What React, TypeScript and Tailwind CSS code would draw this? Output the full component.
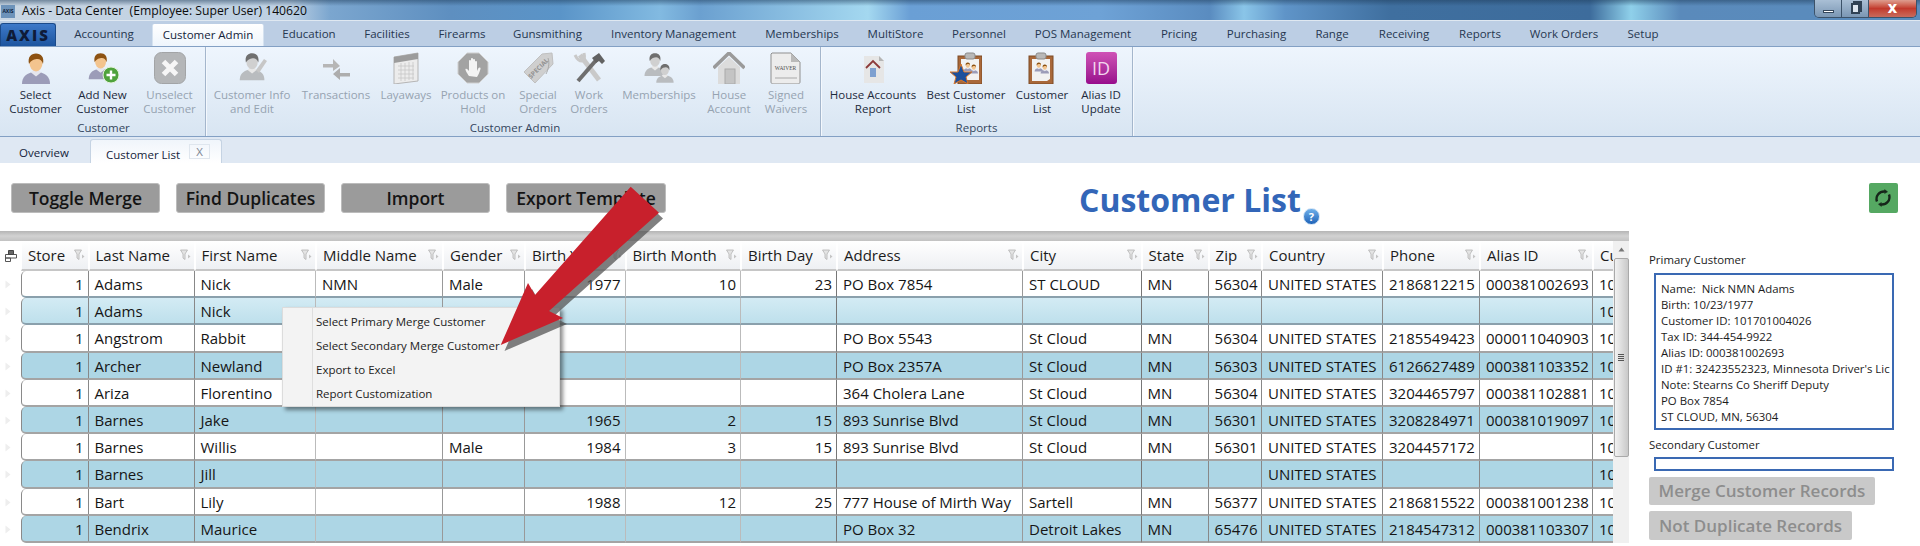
import type { ReactNode } from 'react';

const GRID_COLS =
  'grid grid-cols-[21px_67.5px_106px_121.5px_127px_82px_100.5px_115.5px_96px_186px_118.6px_67px_53.4px_121px_97px_113px_40px]';

const tabs = [
  { label: 'Accounting', w: 'w-[96px]' },
  { label: 'Customer Admin', w: 'w-[112px]', active: true },
  { label: 'Education', w: 'w-[90px]' },
  { label: 'Facilities', w: 'w-[66px]' },
  { label: 'Firearms', w: 'w-[84px]' },
  { label: 'Gunsmithing', w: 'w-[87px]' },
  { label: 'Inventory Management', w: 'w-[165px]' },
  { label: 'Memberships', w: 'w-[92px]' },
  { label: 'MultiStore', w: 'w-[95px]' },
  { label: 'Personnel', w: 'w-[72px]' },
  { label: 'POS Management', w: 'w-[136px]' },
  { label: 'Pricing', w: 'w-[56px]' },
  { label: 'Purchasing', w: 'w-[99px]' },
  { label: 'Range', w: 'w-[52px]' },
  { label: 'Receiving', w: 'w-[92px]' },
  { label: 'Reports', w: 'w-[60px]' },
  { label: 'Work Orders', w: 'w-[108px]' },
  { label: 'Setup', w: 'w-[50px]' },
];

const headers = [
  'Store',
  'Last Name',
  'First Name',
  'Middle Name',
  'Gender',
  'Birth Year',
  'Birth Month',
  'Birth Day',
  'Address',
  'City',
  'State',
  'Zip',
  'Country',
  'Phone',
  'Alias ID',
  'Customer ID',
];

const US = 'UNITED STATES';
const rows = [
  ['1', 'Adams', 'Nick', 'NMN', 'Male', '1977', '10', '23', 'PO Box 7854', 'ST CLOUD', 'MN', '56304', US, '2186812215', '000381002693', '101701004026'],
  ['1', 'Adams', 'Nick', '', '', '', '', '', '', '', '', '', '', '', '', '10'],
  ['1', 'Angstrom', 'Rabbit', '', '', '', '', '', 'PO Box 5543', 'St Cloud', 'MN', '56304', US, '2185549423', '000011040903', '10'],
  ['1', 'Archer', 'Newland', '', '', '', '', '', 'PO Box 2357A', 'St Cloud', 'MN', '56303', US, '6126627489', '000381103352', '10'],
  ['1', 'Ariza', 'Florentino', '', '', '', '', '', '364 Cholera Lane', 'St Cloud', 'MN', '56304', US, '3204465797', '000381102881', '10'],
  ['1', 'Barnes', 'Jake', '', '', '1965', '2', '15', '893 Sunrise Blvd', 'St Cloud', 'MN', '56301', US, '3208284971', '000381019097', '10'],
  ['1', 'Barnes', 'Willis', '', 'Male', '1984', '3', '15', '893 Sunrise Blvd', 'St Cloud', 'MN', '56301', US, '3204457172', '', '10'],
  ['1', 'Barnes', 'Jill', '', '', '', '', '', '', '', '', '', US, '', '', '10'],
  ['1', 'Bart', 'Lily', '', '', '1988', '12', '25', '777 House of Mirth Way', 'Sartell', 'MN', '56377', US, '2186815522', '000381001238', '10'],
  ['1', 'Bendrix', 'Maurice', '', '', '', '', '', 'PO Box 32', 'Detroit Lakes', 'MN', '65476', US, '2184547312', '000381103307', '10'],
];

const RIGHT_ALIGNED = [0, 5, 6, 7];

// the column rules are not all the same grey in the picture
const SEPARATORS = [
  'border-r-[#888888]',
  'border-r-[#888888]',
  'border-r-[#bbbbbb]',
  'border-r-[#999999]',
  'border-r-[#999999]',
  'border-r-[#bbbbbb]',
  'border-r-[#bbbbbb]',
  'border-r-[#777777]',
  'border-r-[#999999]',
  'border-r-[#777777]',
  'border-r-[#888888]',
  'border-r-[#888888]',
  'border-r-[#888888]',
  'border-r-[#888888]',
  'border-r-[#888888]',
  'border-r-[#888888]',
];

const customerLines = [
  'Name:  Nick NMN Adams',
  'Birth: 10/23/1977',
  'Customer ID: 101701004026',
  'Tax ID: 344-454-9922',
  'Alias ID: 000381002693',
  "ID #1: 32423552323, Minnesota Driver's Lic",
  'Note: Stearns Co Sheriff Deputy',
  'PO Box 7854',
  'ST CLOUD, MN, 56304',
];

const menuItems = [
  'Select Primary Merge Customer',
  'Select Secondary Merge Customer',
  'Export to Excel',
  'Report Customization',
];

function Person({ x = 0, y = 0, s = 1, gray = false }: { x?: number; y?: number; s?: number; gray?: boolean }) {
  return (
    <g transform={`translate(${x} ${y}) scale(${s})`}>
      <path d="M2 32C2 25 6 22 11 20.5L21 20.5C26 22 30 25 30 32Z" fill={gray ? '#b9bcbf' : '#9c9cb8'} />
      <path d="M11 20.5L16 24.5L21 20.5L19 18L13 18Z" fill={gray ? '#e8e8e8' : '#e6e6ee'} />
      <ellipse cx="16" cy="11" rx="6.5" ry="8.5" fill={gray ? '#d0d0d0' : '#f3c48e'} />
      <path d="M9 12C7.5 5 11 1.5 16 1.5C21 1.5 24.5 5 23 12C22 8.5 20 7 17.5 7C15 7 11 8 9 12Z" fill={gray ? '#6f6f6f' : '#8d5212'} />
    </g>
  );
}

function AddBadge() {
  return (
    <g>
      <circle cx="24" cy="23" r="8" fill="#4fa23c" stroke="#e4f2dc" strokeWidth="1" />
      <path d="M24 18.5V27.5M19.5 23H28.5" stroke="#fff" strokeWidth="2.4" />
    </g>
  );
}

function Clipboard({ star = false }: { star?: boolean }) {
  return (
    <svg width="32" height="32" viewBox="0 0 32 32">
      <rect x={star ? 8 : 3} y="4" width="24" height="28" fill="#a9683a" stroke="#7d4a24" />
      <path d={star ? 'M11 7H29V28H11Z' : 'M6 7H24V27L21 29H6Z'} fill="#f2f2f2" />
      <rect x={star ? 15 : 10} y="1" width="10" height="6" rx="2" fill="#b8b8b8" stroke="#8b8b8b" />
      <Person x={star ? 13 : 8} y={10} s={0.3} />
      <Person x={star ? 19 : 14} y={12} s={0.3} />
      {star && (
        <path
          d="M11 12L14 20L22 20L16 25L18 32L11 28L4 32L6 25L0 20L8 20Z"
          fill="#1c4f9c"
          stroke="#d9772a"
          strokeWidth="1"
        />
      )}
    </svg>
  );
}

const ICONS: Record<string, ReactNode> = {
  select: (
    <svg width="32" height="32" viewBox="0 0 32 32">
      <Person />
    </svg>
  ),
  add: (
    <svg width="32" height="32" viewBox="0 0 32 32">
      <Person s={0.85} />
      <AddBadge />
    </svg>
  ),
  unselect: (
    <svg width="32" height="32" viewBox="0 0 32 32">
      <rect x="0.5" y="0.5" width="31" height="31" rx="7" fill="#b4b6b8" stroke="#a2a4a6" />
      <path d="M9.5 9.5L22.5 22.5M22.5 9.5L9.5 22.5" stroke="#f6f6f6" strokeWidth="5" />
    </svg>
  ),
  info: (
    <svg width="32" height="32" viewBox="0 0 32 32">
      <Person x={2} s={0.88} gray />
      <path d="M20 18L28 7L31 9L23 21Z" fill="#c7c7c7" />
    </svg>
  ),
  transactions: (
    <svg width="32" height="32" viewBox="0 0 32 32">
      <path d="M3 12H13V7L20 14L13 19V15.500H3Z" fill="#b6b6b6" />
      <path d="M30 21H20V16L13 22L20 28V24.500H30Z" fill="#adadad" />
    </svg>
  ),
  layaways: (
    <svg width="32" height="32" viewBox="0 0 32 32">
      <path d="M4 5L28 1V29L4 32Z" fill="#ececec" stroke="#b5b5b5" />
      <path d="M4 5L28 1V7L4 11Z" fill="#9c9c9c" />
      <path d="M8 14H24M8 18H24M8 22H24M8 26H24M11 11V29M15 11V29M19 10V28M23 10V28" stroke="#c8c8c8" strokeWidth="0.8" />
    </svg>
  ),
  hold: (
    <svg width="32" height="32" viewBox="0 0 32 32">
      <path d="M10 1H22L31 10V22L22 31H10L1 22V10Z" fill="#a3a3a3" stroke="#cfcfcf" />
      <path
        d="M12 24C10 21 8 18 8.500 17C9.500 16 11 17.500 12 19V9C12 7.500 14 7.500 14 9V15V7C14 5.500 16 5.500 16 7V15V8C16 6.500 18 6.500 18 8V16V10C18 8.500 20 8.500 20 10V19L21.500 16C22.500 15 24 15.500 23.500 17C22.500 20 21.500 23 20 25Z"
        fill="#f4f4f4"
      />
    </svg>
  ),
  special: (
    <svg width="32" height="32" viewBox="0 0 32 32">
      <path d="M2 20L20 2L30 1L31 12L13 31Z" fill="#cfcfcf" stroke="#c0c0c0" />
      <text
        x="0"
        y="0"
        transform="translate(9 27) rotate(-45)"
        fontFamily="Open Sans, sans-serif"
        fontSize="6.500"
        fontWeight="700"
        fill="#8f8f8f"
      >
        SPECIAL
      </text>
      <path d="M26 6C28 12 26 18 24 22" stroke="#a8a8a8" fill="none" />
    </svg>
  ),
  work: (
    <svg width="32" height="32" viewBox="0 0 32 32">
      <path d="M7 3L26 28" stroke="#c9c9c9" strokeWidth="5" />
      <path d="M2 3C4 7 6 9 9 9C12 8 12 5 11 1" stroke="#c9c9c9" strokeWidth="3" fill="none" />
      <path d="M25 6L5 29" stroke="#6e6e6e" strokeWidth="4" />
      <path d="M19 6L26 1L32 9L29 12L26 9L23 11Z" fill="#626262" />
    </svg>
  ),
  members: (
    <svg width="32" height="32" viewBox="0 0 32 32">
      <Person x={0} y={0} s={0.75} gray />
      <Person x={12} y={11} s={0.62} gray />
    </svg>
  ),
  house: (
    <svg width="32" height="32" viewBox="0 0 32 32">
      <path d="M5 15L16 5L27 15V32H5Z" fill="#dcdcdc" />
      <path d="M0.500 16L16 1L31.500 16" fill="none" stroke="#9a9a9a" strokeWidth="3.500" />
      <rect x="12" y="17" width="10" height="15" fill="#c4c4c4" stroke="#aaaaaa" />
    </svg>
  ),
  waiver: (
    <svg width="32" height="32" viewBox="0 0 32 32">
      <path d="M2 1H21L30 10V30C30 31 29 32 28 32H3C2 32 1 31 1 30V2Z" fill="#ececec" stroke="#8f8f8f" />
      <path d="M21 1V10H30Z" fill="#b9b9b9" />
      <text x="15.500" y="18" textAnchor="middle" fontFamily="Liberation Serif, serif" fontSize="5.500" fill="#4c4c4c">
        WAIVER
      </text>
      <path d="M5 26H27" stroke="#a8a8a8" />
    </svg>
  ),
  houseReport: (
    <svg width="32" height="32" viewBox="0 0 32 32">
      <path d="M7 4H22L27 9V31H7Z" fill="#e6e6e6" />
      <path d="M22 4V9H27Z" fill="#b5b5b5" />
      <path d="M9 16L16 9L23 16" fill="none" stroke="#8c3a3a" strokeWidth="1.800" />
      <rect x="13" y="16" width="6" height="9" fill="#7ea0d0" />
    </svg>
  ),
  best: <Clipboard star />,
  list: <Clipboard />,
  alias: (
    <div className="w-[31px] h-[32px] rounded-[3px] bg-gradient-to-b from-[#cf52b6] to-[#98098c] flex items-center justify-center text-[18px] leading-none text-[#f3d6ee]">
      ID
    </div>
  ),
};

function RibbonButton({ icon, l1, l2, w, off }: { icon: string; l1: string; l2?: string; w: string; off?: boolean }) {
  return (
    <div className={`${w} flex flex-col items-center shrink-0`}>
      <div className="h-[32px] flex items-center justify-center">{ICONS[icon]}</div>
      <div
        className={`mt-[4px] text-center text-[11.5px] leading-[14px] whitespace-nowrap ${off ? 'text-[#96a3b1]' : 'text-[#1d2a3c]'}`}
      >
        <div>{l1}</div>
        <div>{l2}</div>
      </div>
    </div>
  );
}

function RibbonGroup({ label, w, pl, children }: { label: string; w: string; pl: string; children: ReactNode }) {
  return (
    <div className={`${w} ${pl} shrink-0 h-full flex flex-col border-r border-[#a4b6cc] shadow-[1px_0_0_#f4f8fd]`}>
      <div className="flex pt-[5px]">{children}</div>
      <div className="text-center text-[11.5px] leading-[14px] mt-[5px] text-[#34465e]">{label}</div>
    </div>
  );
}

function FilterIcon() {
  return (
    <svg width="11" height="12" viewBox="0 0 11 12" className="shrink-0">
      <path d="M0.500 1H7.500L5 5V10.500L3 9V5Z" fill="#e4e4e4" stroke="#b3b3b3" strokeWidth="0.8" />
      <path d="M8 5.500L10.500 7.500L8 9.500Z" fill="#c4c4c4" />
    </svg>
  );
}

function GridHeader() {
  return (
    <div className={`${GRID_COLS} h-[30px]`}>
      <div className="flex items-center justify-center bg-white">
        <svg width="14" height="14" viewBox="0 0 14 14">
          <path d="M1.500 5.500H12.500V9H1.500ZM1.500 9H6.500V12.500H1.500Z" fill="none" stroke="#555" />
          <path d="M4.500 1.500H9.500V5.500H4.500Z" fill="#666" stroke="#444" />
        </svg>
      </div>
      {headers.map((h, i) => (
        <div
          key={h}
          className="flex items-center pl-[6px] pr-[3px] gap-[2px] overflow-hidden bg-gradient-to-b from-[#ffffff] to-[#eef0f3] border-x border-white border-b-2 border-b-[#c6c6c6] text-[15px] leading-none text-[#1c1c1c]"
        >
          <span className="flex-1 whitespace-nowrap">{h}</span>
          {i < 15 && <FilterIcon />}
        </div>
      ))}
    </div>
  );
}

function GridRow({ cells, index }: { cells: string[]; index: number }) {
  const bg = index === 1 ? 'bg-gradient-to-b from-[#d3ebf4] to-[#bee0ec]' : index % 2 === 0 ? 'bg-white' : 'bg-[#add6e5]';
  const rule = index < 2 ? 'border-b-[#8aa0ac]' : 'border-b-[#a4a4a4]';
  return (
    <div className={`${GRID_COLS} h-[27.2px]`}>
      <div className="flex items-center justify-center bg-white">
        <svg width="6" height="9" viewBox="0 0 6 9" className="-ml-[5px]">
          <path d="M0.500 0.500L5.500 4.500L0.500 8.500Z" fill="#eeeeee" />
        </svg>
      </div>
      {cells.map((c, i) => (
        <div
          key={i}
          className={`${bg} ${rule} ${SEPARATORS[i]} flex items-center overflow-hidden whitespace-nowrap border-b-2 border-r text-[15px] leading-none text-[#151515] pl-[6px] pr-[4px] pt-[2px] ${
            i === 0 ? 'rounded-l-[5px] border-l border-l-[#8a8a8a] ' : ''
          }${RIGHT_ALIGNED.includes(i) ? 'justify-end' : ''}`}
        >
          {c}
        </div>
      ))}
    </div>
  );
}

function Scrollbar() {
  return (
    <div className="w-[16px] shrink-0 flex flex-col items-center bg-[#f0f0f0]">
      <div className="h-[17px] flex items-center justify-center">
        <svg width="7" height="5" viewBox="0 0 7 5">
          <path d="M3.500 0.500L6.500 4.500H0.500Z" fill="#777" />
        </svg>
      </div>
      <div className="h-[199px] w-[15px] rounded-[2px] border border-[#a9a9a9] bg-gradient-to-r from-[#f2f2f2] to-[#c9c9c9] flex flex-col items-center justify-center gap-[1px]">
        <div className="w-[6px] h-[1px] bg-[#555]" />
        <div className="w-[6px] h-[1px] bg-[#555]" />
        <div className="w-[6px] h-[1px] bg-[#555]" />
        <div className="w-[6px] h-[1px] bg-[#555]" />
      </div>
    </div>
  );
}

function ActionButton({ children, w }: { children: ReactNode; w: string }) {
  return (
    <div className={`${w} h-[30px] rounded-[3px] border border-[#bcbcbc] bg-[#9b9b9b] flex items-center justify-center text-[17.5px] font-semibold text-[#141414] whitespace-nowrap`}>
      {children}
    </div>
  );
}

export default function App() {
  return (
    <div className="relative w-[1920px] h-[546px] overflow-hidden bg-white font-['Open_Sans',sans-serif]">
      {/* Title bar */}
      <div className="h-[21px] flex bg-[linear-gradient(180deg,rgba(30,60,90,0.5)_0%,rgba(30,60,90,0)_30%),linear-gradient(90deg,#c9d6e3_0px,#bdd0e3_290px,#7ba6cf_330px,#5e8fc0_450px,#5a94c8_560px,#82bae1_660px,#6ba0d0_700px,#a4d8f0_868px,#6a9fd5_910px,#6ea2d6_1100px,#5a8cc0_1210px,#8ac5e8_1244px,#5f94c8_1285px,#3f6f9f_1390px,#3d6c9c_1590px,#8fd0ea_1631px,#5a8abb_1680px,#5a8cbd_1920px)] border-b border-[#dfe8f1]">
        <div className="ml-[1px] mt-[5px] w-[14px] h-[13px] bg-[#6d93ba] text-[5px] leading-[13px] font-bold text-center text-[#10233d]">AXIS</div>
        <div className="ml-[7px] text-[12.2px] leading-[21px] text-[#0c0c0c] whitespace-pre">Axis - Data Center  (Employee: Super User) 140620</div>
        <div className="ml-auto mr-[3px] h-[18px] flex rounded-b-[5px] overflow-hidden border border-t-0 border-[#3c5269]">
          <div className="w-[27px] bg-gradient-to-b from-[#a9bfd5] to-[#7b97b4] flex items-center justify-center border-r border-[#3c5269]">
            <div className="w-[11px] h-[3px] mt-[6px] bg-white border border-[#34475c]" />
          </div>
          <div className="w-[27px] bg-gradient-to-b from-[#a9bfd5] to-[#7b97b4] flex items-center justify-center border-r border-[#3c5269]">
            <div className="w-[9px] h-[11px] bg-[#dce6f0] border-2 border-[#2f4255] shadow-[2px_-2px_0_#2f4255]" />
          </div>
          <div className="w-[47px] bg-gradient-to-b from-[#dd9d8f] via-[#c2392c] to-[#c86a5c] flex items-center justify-center text-[13px] font-extrabold leading-none text-white">X</div>
        </div>
      </div>

      {/* Ribbon tabs */}
      <div className="h-[25px] flex bg-[#bccee4] text-[11.5px] text-[#263750]">
        <div className="w-[56px] mt-[2px] rounded-t-[3px] bg-gradient-to-b from-[#3d79c9] to-[#1d559f] border border-b-0 border-[#1b4a8a] flex items-center justify-center text-[15px] font-extrabold tracking-[2px] text-[#0f1b38]">
          AXIS
        </div>
        {tabs.map((t) =>
          t.active ? (
            <div key={t.label} className={`${t.w} mt-[3px] rounded-t-[2px] bg-gradient-to-b from-[#ffffff] to-[#eef5fc] flex items-center justify-center text-[#14233a] relative z-10 border-x border-[#d5e2f0]`}>
              {t.label}
            </div>
          ) : (
            <div key={t.label} className={`${t.w} flex items-center justify-center whitespace-nowrap pt-[1px]`}>
              {t.label}
            </div>
          )
        )}
      </div>

      {/* Ribbon */}
      <div className="h-[91px] flex border-y border-[#83a0c4] bg-gradient-to-b from-[#eef5fd] to-[#d8e5f2]">
        <RibbonGroup label="Customer" w="w-[206px]" pl="pl-[2px]">
          <RibbonButton icon="select" l1="Select" l2="Customer" w="w-[67px]" />
          <RibbonButton icon="add" l1="Add New" l2="Customer" w="w-[67px]" />
          <RibbonButton icon="unselect" l1="Unselect" l2="Customer" w="w-[67px]" off />
        </RibbonGroup>
        <RibbonGroup label="Customer Admin" w="w-[615px]" pl="pl-[4px]">
          <RibbonButton icon="info" l1="Customer Info" l2="and Edit" w="w-[84px]" off />
          <RibbonButton icon="transactions" l1="Transactions" w="w-[84px]" off />
          <RibbonButton icon="layaways" l1="Layaways" w="w-[56px]" off />
          <RibbonButton icon="hold" l1="Products on" l2="Hold" w="w-[78px]" off />
          <RibbonButton icon="special" l1="Special" l2="Orders" w="w-[52px]" off />
          <RibbonButton icon="work" l1="Work" l2="Orders" w="w-[50px]" off />
          <RibbonButton icon="members" l1="Memberships" w="w-[90px]" off />
          <RibbonButton icon="house" l1="House" l2="Account" w="w-[50px]" off />
          <RibbonButton icon="waiver" l1="Signed" l2="Waivers" w="w-[64px]" off />
        </RibbonGroup>
        <RibbonGroup label="Reports" w="w-[312px]" pl="pl-[0px]">
          <RibbonButton icon="houseReport" l1="House Accounts" l2="Report" w="w-[104px]" />
          <RibbonButton icon="best" l1="Best Customer" l2="List" w="w-[82px]" />
          <RibbonButton icon="list" l1="Customer" l2="List" w="w-[70px]" />
          <RibbonButton icon="alias" l1="Alias ID" l2="Update" w="w-[48px]" />
        </RibbonGroup>
      </div>

      {/* Document tabs */}
      <div className="h-[26px] flex bg-[#dfe8f3] text-[11.5px] text-[#14233a]">
        <div className="w-[90px] pl-[19px] leading-[32px]">Overview</div>
        <div className="w-[132px] mt-[2px] flex items-start rounded-t-[3px] border border-b-0 border-[#c5d3e3] bg-gradient-to-b from-[#f0f5fb] to-[#ffffff]">
          <span className="ml-[15px] mt-[7px] leading-[16px]">Customer List</span>
          <span className="ml-[9px] mt-[4px] w-[21px] h-[15px] flex items-center justify-center border border-[#dfe6ee] text-[#7d8794] leading-none">X</span>
        </div>
      </div>

      {/* Toolbar */}
      <div className="h-[68px] flex items-start pt-[20px] pl-[11px]">
        <div className="flex gap-[16px]">
          <ActionButton w="w-[149px]">Toggle Merge</ActionButton>
          <ActionButton w="w-[149px]">Find Duplicates</ActionButton>
          <ActionButton w="w-[149px]">Import</ActionButton>
          <ActionButton w="w-[160px]">Export Template</ActionButton>
        </div>
        <div className="ml-[413px] -mt-[5px] text-[32px] font-bold leading-[44px] text-[#3366b8] whitespace-nowrap">Customer List</div>
        <div className="ml-[2px] mt-[25px] w-[17px] h-[17px] rounded-full bg-gradient-to-b from-[#6fb0ea] to-[#1d63b8] border border-[#cfe2f5] flex items-center justify-center text-[11px] font-bold leading-none text-white">?</div>
        <div className="ml-[549px] w-[29px] h-[30px] rounded-[2px] bg-[#55a862] flex items-center justify-center">
          <svg width="18" height="18" viewBox="0 0 18 18" fill="none" stroke="#16261a" strokeWidth="2.400">
            <path d="M3 12.500C1 7 5.500 2 11 2.500" />
            <path d="M15 5.500C17 11 12.500 16 7 15.500" />
            <path d="M10.500 0.500L13.500 2.800L10.500 4.500" fill="#16261a" strokeWidth="0.6" />
            <path d="M7.500 13.500L4.500 15.200L7.500 17.500" fill="#16261a" strokeWidth="0.6" />
          </svg>
        </div>
      </div>

      {/* Grid + merge panel */}
      <div className="flex">
        <div className="w-[1629px] shrink-0">
          <div className="h-[10px] bg-gradient-to-b from-[#b5b5b5] via-[#d2d2d2] to-[#c2c2c2]" />
          <div className="flex">
            <div className="w-[1613px] overflow-hidden">
              <GridHeader />
              {rows.map((r, i) => (
                <GridRow key={i} cells={r} index={i} />
              ))}
            </div>
            <Scrollbar />
          </div>
        </div>
        <div className="pl-[20px] pt-[21px] text-[11.4px] text-[#1b1b1b]">
          <div className="leading-[16px]">Primary Customer</div>
          <div className="ml-[5px] mt-[5px] w-[240px] h-[157px] border-2 border-[#3a69b3] pl-[5px] pt-[6px] overflow-hidden whitespace-nowrap leading-[16px]">
            {customerLines.map((l) => (
              <div key={l} className="whitespace-pre">{l}</div>
            ))}
          </div>
          <div className="mt-[7px] leading-[16px]">Secondary Customer</div>
          <div className="ml-[5px] mt-[4px] w-[240px] h-[14px] border-2 border-[#3a69b3]" />
          <div className="mt-[6px] w-[226px] h-[28px] rounded-[2px] bg-[#c9c9c9] flex items-center justify-center text-[17px] font-semibold text-[#8d8d8d] whitespace-nowrap">Merge Customer Records</div>
          <div className="mt-[6px] w-[203px] h-[29px] rounded-[2px] bg-[#c9c9c9] flex items-center justify-center text-[17px] font-semibold text-[#8d8d8d] whitespace-nowrap">Not Duplicate Records</div>
        </div>
      </div>

      {/* Context menu */}
      <div className="absolute left-[282px] top-[307px] w-[278px] h-[100px] bg-[#f3f3f3] border border-[#dcdcdc] shadow-[3px_3px_4px_rgba(0,0,0,0.45)] flex">
        <div className="w-[30px] border-r border-[#dedede]" />
        <div className="pl-[3px] pt-[2px] text-[11.5px] leading-[24px] text-[#222] whitespace-nowrap">
          {menuItems.map((m) => (
            <div key={m}>{m}</div>
          ))}
        </div>
      </div>

      {/* Callout arrow */}
      <svg className="absolute left-0 top-0 pointer-events-none" width="1920" height="546" viewBox="0 0 1920 546">
        <path d="M504.500 351L532 289L539 301L634.500 192.500L663 218.500L553 317L567 324Z" fill="#555" fillOpacity="0.75" />
        <path d="M500.700 345L528 283L535 295L630.700 186.700L659 212.700L549 311L563 318Z" fill="#c8202c" />
      </svg>
    </div>
  );
}
